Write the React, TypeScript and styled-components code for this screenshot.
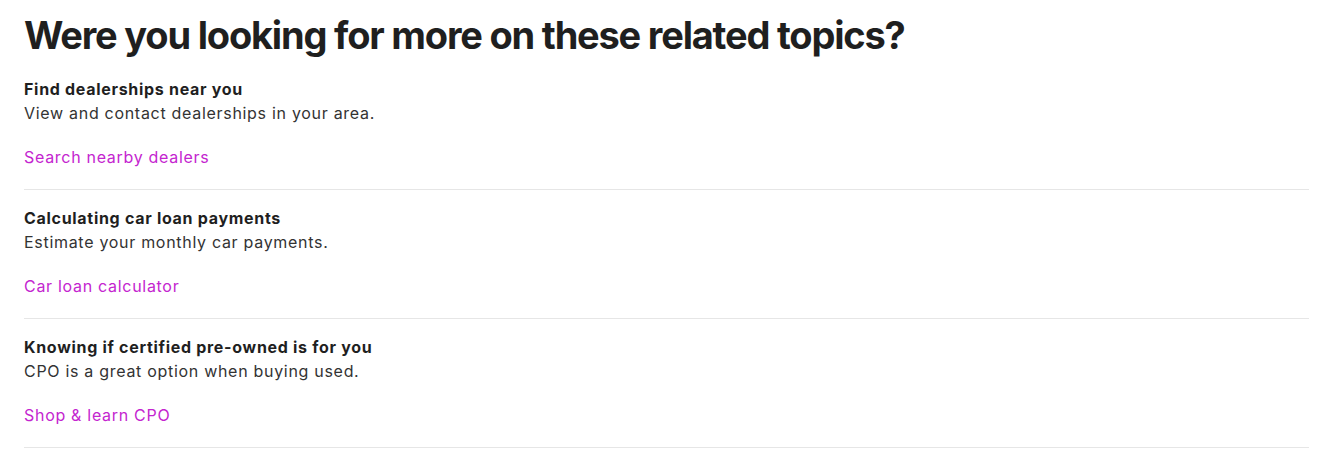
import React from "react";
import styled, { createGlobalStyle } from "styled-components";

const Global = createGlobalStyle`
  html, body { margin: 0; padding: 0; background: #ffffff; }
  body { font-family: Inter, "Noto Sans", sans-serif; color: #262626; }
`;

const Page = styled.main`
  padding: 11px 11px 0 24px;
`;

const Heading = styled.h2`
  margin: 0 0 18px;
  font-family: Inter, "Noto Sans", sans-serif;
  font-size: 38px;
  line-height: 48px;
  font-weight: 700;
  letter-spacing: -1.2px;
  color: #1f1f1f;
`;

const List = styled.div`
  display: flex;
  flex-direction: column;
`;

const Topic = styled.section<{ $first?: boolean }>`
  padding: ${(p) => (p.$first ? "0" : "16px")} 0 20px;
  border-bottom: 1px solid #e6e6e6;
`;

const Title = styled.h3`
  margin: 0;
  font-size: 16px;
  line-height: 24px;
  font-weight: 700;
  letter-spacing: 0.7px;
  color: #1f1f1f;
`;

const Desc = styled.p`
  margin: 0;
  font-size: 16px;
  line-height: 24px;
  font-weight: 400;
  letter-spacing: 0.7px;
  color: #333333;
`;

const Link = styled.a`
  display: inline-block;
  margin-top: 20px;
  font-size: 16px;
  line-height: 24px;
  letter-spacing: 0.7px;
  color: #c425cf;
  text-decoration: none;
`;

const topics = [
  {
    title: "Find dealerships near you",
    desc: "View and contact dealerships in your area.",
    link: "Search nearby dealers",
  },
  {
    title: "Calculating car loan payments",
    desc: "Estimate your monthly car payments.",
    link: "Car loan calculator",
  },
  {
    title: "Knowing if certified pre-owned is for you",
    desc: "CPO is a great option when buying used.",
    link: "Shop & learn CPO",
  },
];

export default function App() {
  return (
    <>
      <Global />
      <Page>
        <Heading>Were you looking for more on these related topics?</Heading>
        <List>
          {topics.map((t, i) => (
            <Topic key={t.title} $first={i === 0}>
              <Title>{t.title}</Title>
              <Desc>{t.desc}</Desc>
              <Link href="#">{t.link}</Link>
            </Topic>
          ))}
        </List>
      </Page>
    </>
  );
}
